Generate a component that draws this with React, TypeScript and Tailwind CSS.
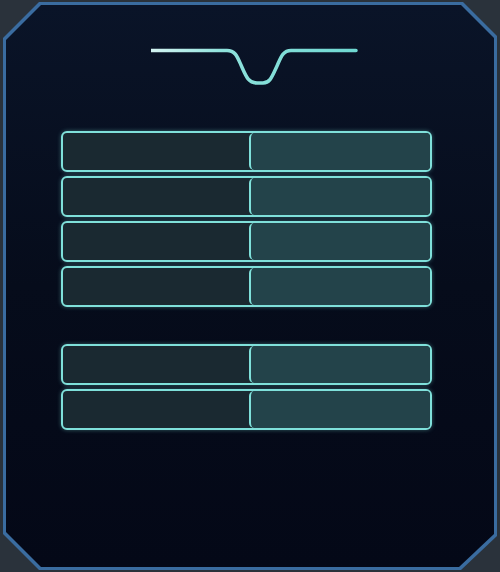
import React from 'react'

const groups = [4, 2]

function Row() {
  return (
    <div className="flex h-[41px] w-[371px] border-2 border-[#7fe0da] rounded-[6px] overflow-hidden bg-[#1a2931] shadow-[0_0_4px_rgba(120,220,214,0.4)]">
      <div className="w-[186px]" />
      <div className="flex-1 border-l-2 border-[#7fe0da] rounded-l-[5px] bg-[#23434a]" />
    </div>
  )
}

export default function App() {
  return (
    <div className="w-[500px] h-[572px] bg-[#2a323b] px-[3px] py-[2px]">
      <div className="h-full bg-[#3a6ca0] p-[3px] [clip-path:polygon(36px_0,calc(100%-34px)_0,100%_34px,100%_calc(100%-34px),calc(100%-36px)_100%,36px_100%,0_calc(100%-36px),0_36px)]">
        <div className="h-full flex flex-col items-start pl-[55px] bg-gradient-to-b from-[#0a1428] via-[#060c1b] to-[#040817] [clip-path:polygon(35px_0,calc(100%-33px)_0,100%_33px,100%_calc(100%-33px),calc(100%-35px)_100%,35px_100%,0_calc(100%-35px),0_35px)]">
          <svg width="207" height="38" viewBox="0 0 207 38" className="mt-[43px] ml-[90px]" fill="none">
            <defs>
              <linearGradient id="ln" x1="0" y1="0" x2="1" y2="0">
                <stop offset="0" stopColor="#d4f4f2" />
                <stop offset="0.35" stopColor="#8fe2dc" />
                <stop offset="1" stopColor="#6fd8d2" />
              </linearGradient>
            </defs>
            <path
              d="M0 2.5 H76 C84 2.5 86 8 90 17 C95 28 97 35 106 35 H112 C119 35 121 29 126 18 C130 9 132 2.5 140 2.5 H205"
              stroke="url(#ln)"
              strokeWidth="3.5"
              strokeLinecap="round"
              strokeLinejoin="round"
            />
          </svg>
          {groups.map((n, gi) => (
            <div key={gi} className={`flex flex-col gap-[4px] ${gi === 0 ? 'mt-[45px]' : 'mt-[37px]'}`}>
              {Array.from({ length: n }).map((_, i) => (
                <Row key={i} />
              ))}
            </div>
          ))}
        </div>
      </div>
    </div>
  )
}
